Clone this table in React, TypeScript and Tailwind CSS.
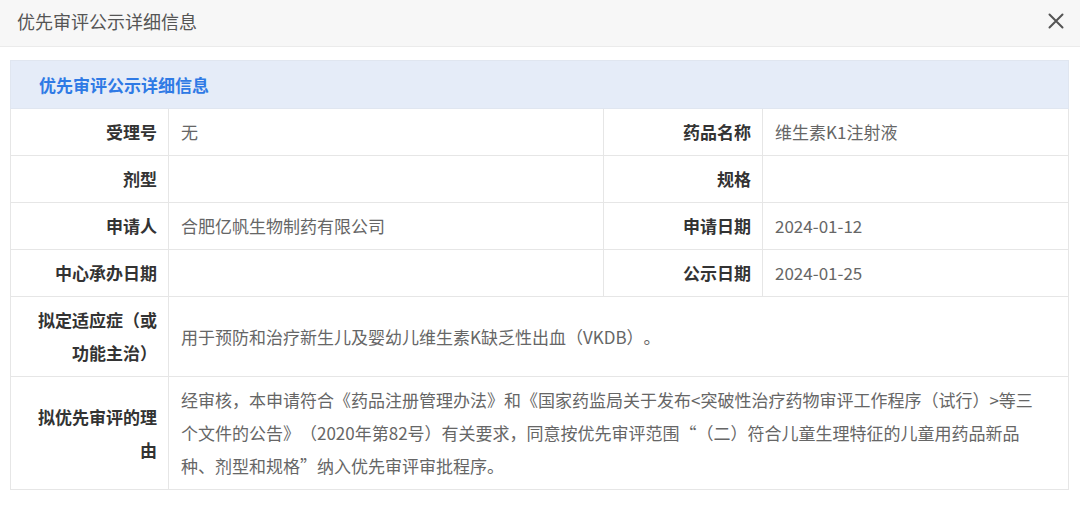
import React from "react";

const font = { fontFamily: '"Noto Sans CJK SC", "Noto Sans", sans-serif' };

function Label({ children }: { children: React.ReactNode }) {
  return (
    <td className="border border-[#e6e6e6] pr-[11px] pl-3 pt-[6px] pb-[7px] text-right align-middle font-bold text-[#333] leading-[33px]">
      {children}
    </td>
  );
}

function Value({ children, colSpan }: { children?: React.ReactNode; colSpan?: number }) {
  return (
    <td
      colSpan={colSpan}
      className="border border-[#e6e6e6] pl-[12px] pr-[24px] pt-[6px] pb-[7px] text-left align-middle text-[#666] leading-[33px]"
    >
      {children}
    </td>
  );
}

export default function App() {
  return (
    <div className="w-[1080px] h-[505px] bg-white overflow-hidden [text-spacing-trim:space-all]" style={font}>
      <div className="h-[47px] bg-[#f7f7f7] border-b border-[#ebebeb] flex items-center justify-between pl-[17px] pr-[16px]">
        <span className="text-[18px] text-[#555] leading-none -mt-[5px]">优先审评公示详细信息</span>
        <svg width="16" height="16" viewBox="0 0 16 16" className="-mt-[5px]">
          <path d="M1.5 1.5 L14.5 14.5 M14.5 1.5 L1.5 14.5" stroke="#555" strokeWidth="2" strokeLinecap="round" />
        </svg>
      </div>
      <div className="pl-[10px] pr-[12px] pt-[13px]">
        <table className="w-[1058px] border-collapse text-[17px] table-fixed">
          <colgroup>
            <col className="w-[158px]" />
            <col className="w-[435px]" />
            <col className="w-[159px]" />
            <col className="w-[306px]" />
          </colgroup>
          <tbody>
            <tr>
              <td colSpan={4} className="border border-[#e0e6f0] bg-[#e5ecf8] h-[48px] pl-[28px] text-[#2f7ae5] font-bold text-[17px] align-middle">
                优先审评公示详细信息
              </td>
            </tr>
            <tr>
              <Label>受理号</Label>
              <Value>无</Value>
              <Label>药品名称</Label>
              <Value>维生素K1注射液</Value>
            </tr>
            <tr>
              <Label>剂型</Label>
              <Value />
              <Label>规格</Label>
              <Value />
            </tr>
            <tr>
              <Label>申请人</Label>
              <Value>合肥亿帆生物制药有限公司</Value>
              <Label>申请日期</Label>
              <Value>2024-01-12</Value>
            </tr>
            <tr>
              <Label>中心承办日期</Label>
              <Value />
              <Label>公示日期</Label>
              <Value>2024-01-25</Value>
            </tr>
            <tr>
              <Label>拟定适应症（或功能主治）</Label>
              <Value colSpan={3}>用于预防和治疗新生儿及婴幼儿维生素K缺乏性出血（VKDB）。</Value>
            </tr>
            <tr>
              <Label>拟优先审评的理由</Label>
              <Value colSpan={3}>
                经审核，本申请符合《药品注册管理办法》和《国家药监局关于发布&lt;突破性治疗药物审评工作程序（试行）&gt;等三个文件的公告》（2020年第82号）有关要求，同意按优先审评范围“（二）符合儿童生理特征的儿童用药品新品种、剂型和规格”纳入优先审评审批程序。
              </Value>
            </tr>
          </tbody>
        </table>
      </div>
    </div>
  );
}
